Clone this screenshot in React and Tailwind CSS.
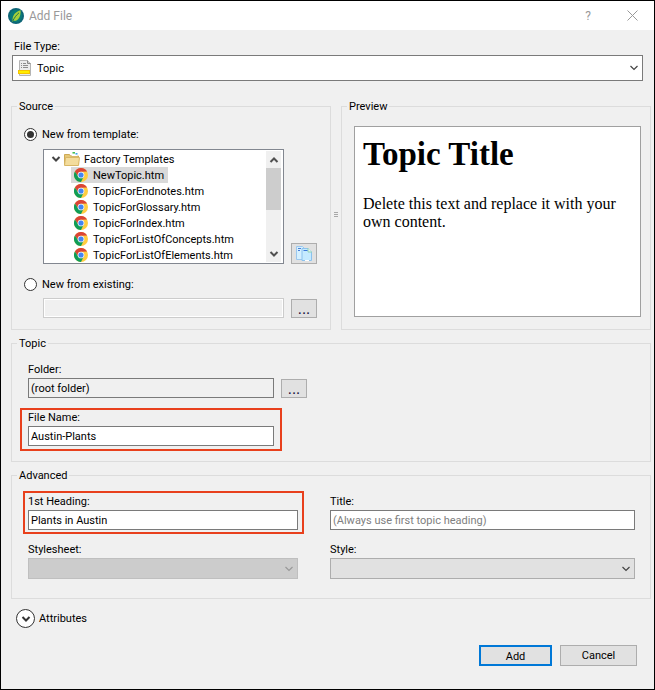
import { useState } from "react";

const templates = [
  "NewTopic.htm",
  "TopicForEndnotes.htm",
  "TopicForGlossary.htm",
  "TopicForIndex.htm",
  "TopicForListOfConcepts.htm",
  "TopicForListOfElements.htm",
];

function AppLogo() {
  return (
    <svg viewBox="0 0 16 16" className="size-4 shrink-0" aria-hidden="true">
      <circle cx="8" cy="8" r="8" fill="#0e6577" />
      <circle cx="8" cy="8" r="6.2" fill="#0a7a78" />
      <path d="M12.6 2.2C7.6 3.6 4.4 7 4.6 12.2L4 14l1.4-1.2c4.400.6 7.600-3.600 7.200-10.600z" fill="#a8cf38" />
      <path d="M11 4.800C8.400 7 6.400 9.600 4.700 13.200" stroke="#0a6a5c" strokeWidth="0.9" fill="none" />
    </svg>
  );
}

function TopicIcon() {
  return (
    <svg viewBox="0 0 14 17" className="h-[17px] w-3.5" aria-hidden="true">
      <path d="M1.500.5h8l3 3v12h-11z" fill="#ececec" stroke="#b4b4b4" />
      <path d="M9.500.5v3h3" fill="#d0d0d0" stroke="#8a8a8a" />
      <path d="M3 3.500h1M5 3.500h3M3 5.500h1M5 5.500h5M3 7.500h1M5 7.500h5" stroke="#8d8d8d" />
      <rect x="0.500" y="10.500" width="11" height="3" fill="#ffee00" stroke="#f5c400" />
    </svg>
  );
}

function FolderIcon() {
  return (
    <svg viewBox="0 0 16 14" className="h-3.5 w-4 shrink-0" aria-hidden="true">
      <path d="M.5 2.500h5l1 1.500h8v8.500h-14z" fill="#e6c877" stroke="#cda955" />
      <path d="M8 2.500V1h5.500v3H8z" fill="#fff" />
      <path d="M8.500.800h2.500" stroke="#3cba46" strokeWidth="1.500" />
      <path d="M11.500 1.800h2" stroke="#35a2e8" strokeWidth="1.500" />
      <path d="M1.500 5.500h14l-1 8H.500z" fill="#f3dc9c" stroke="#d8b766" />
    </svg>
  );
}

function ChromeIcon() {
  return (
    <svg viewBox="0 0 48 48" className="size-3.5 shrink-0" aria-hidden="true">
      <circle cx="24" cy="24" r="24" fill="#ffcd40" />
      <path d="M3.200 12A24 24 0 0 1 44.800 12L24 13A11 11 0 0 0 14.500 29.500z" fill="#db4437" />
      <path d="M3.200 12A24 24 0 0 0 24 48L33.500 29.500A11 11 0 0 1 14.500 29.500z" fill="#0f9d58" />
      <circle cx="24" cy="24" r="11.500" fill="#f4f4f4" />
      <circle cx="24" cy="24" r="8.800" fill="#4285f4" />
    </svg>
  );
}

function CopyIcon() {
  return (
    <svg viewBox="0 0 16 15" className="h-[15px] w-4" aria-hidden="true">
      <path d="M.5.500h6l1.500 1.500v11.500H.500z" fill="#d5f0ff" stroke="#9cc8ee" />
      <path d="M2 2.500h3M2 4.500h2" stroke="#4a7fd8" />
      <path d="M6 2.500h6l3.500 3v9H6z" fill="#c5eaff" stroke="#8cc2ee" />
      <path d="M12 2v4h4" fill="#e6f6e6" stroke="#8fd0b8" />
      <path d="M7.500 4.500h4" stroke="#3b78d8" />
      <path d="M9 14.500h4" stroke="#fff" />
    </svg>
  );
}

function Chevron({ className = "", up = false, bold = false }) {
  return (
    <svg viewBox="0 0 10 6" className={`h-1.5 w-2.5 ${className}`} aria-hidden="true">
      <path
        d={up ? "M1.500 5L5 1.500L8.500 5" : "M1.500 1L5 4.500L8.500 1"}
        fill="none"
        stroke="currentColor"
        strokeWidth={bold ? 2 : 1.2}
      />
    </svg>
  );
}

function Group({ title, className = "", children }) {
  return (
    <fieldset className="min-w-0 border border-[#dcdcdc]">
      <legend className="ml-[5px] px-0.5 pt-px leading-3.5">{title}</legend>
      <div className={className}>{children}</div>
    </fieldset>
  );
}

function TextInput({ background = "bg-white", ...props }) {
  return (
    <input
      type="text"
      className={`block h-5 w-full min-w-0 border border-[#7a7a7a] px-0.5 text-black outline-none placeholder:text-[#808080] ${background}`}
      {...props}
    />
  );
}

function Field({ id, label, children }) {
  return (
    <div className="min-w-0">
      <label htmlFor={id} className="block leading-4">
        {label}
      </label>
      {children}
    </div>
  );
}

function BrowseButton({ label, disabled }) {
  return (
    <button
      type="button"
      aria-label={label}
      disabled={disabled}
      className="flex h-[19px] w-[26px] shrink-0 items-end justify-center border border-[#adadad] bg-[#e1e1e1] text-base leading-4 text-[#1a1040]"
    >
      ...
    </button>
  );
}

function Radio({ id, checked, onChange, children }) {
  return (
    <div className="flex items-center gap-[5px]">
      <input
        id={id}
        type="radio"
        name="source"
        checked={checked}
        onChange={onChange}
        className="m-0 grid size-[13px] shrink-0 appearance-none place-items-center rounded-full border border-[#333] bg-white before:size-[7px] before:rounded-full checked:before:bg-[#333]"
      />
      <label htmlFor={id} className="pt-0.5 leading-3.5">
        {children}
      </label>
    </div>
  );
}

export default function App() {
  const [source, setSource] = useState("template");
  const [selected, setSelected] = useState("NewTopic.htm");
  const [fileName, setFileName] = useState("Austin-Plants");
  const [heading, setHeading] = useState("Plants in Austin");

  return (
    <div className="flex min-h-screen flex-col border border-black bg-[#f0f0f0] font-[Roboto,sans-serif] text-[11px] text-black">
      <header className="flex h-[29px] items-center gap-[5px] bg-white pr-3 pl-[7px] text-[#999]">
        <AppLogo />
        <h1 className="grow text-xs">Add File</h1>
        <button type="button" aria-label="Help" className="w-3 text-xs">
          ?
        </button>
        <button type="button" aria-label="Close" className="ml-6 p-1">
          <svg viewBox="0 0 11 11" className="size-[11px]" aria-hidden="true">
            <path d="M.5.500l10 10M10.500.500l-10 10" stroke="currentColor" />
          </svg>
        </button>
      </header>

      <main className="flex flex-col pt-[9px] pr-[3px] pl-2.5">
        <div className="pr-2 pl-px">
          <label htmlFor="type" className="ml-0.5 block leading-4">
            File Type:
          </label>
          <div className="relative">
            <select
              id="type"
              className="block h-[26px] w-full appearance-none border border-[#7a7a7a] bg-white pt-0.5 pl-6 text-black"
            >
              <option>Topic</option>
            </select>
            <span className="pointer-events-none absolute inset-y-0 left-1.5 flex items-center">
              <TopicIcon />
            </span>
            <Chevron className="pointer-events-none absolute top-2.5 right-1 text-[#444]" />
          </div>
        </div>

        <div className="mt-[18px] grid grid-cols-[minmax(0,32fr)_minmax(0,1fr)_minmax(0,31fr)]">
          <Group title="Source" className="pt-3 pr-[13px] pb-[11px] pl-3">
            <Radio
              id="from-template"
              checked={source === "template"}
              onChange={() => setSource("template")}
            >
              New from template:
            </Radio>
            <div className="mt-[7px] flex items-end gap-[7px] pl-[19px]">
              <div className="flex h-[115px] min-w-0 grow overflow-hidden border border-[#828790] bg-white">
                <ul role="tree" aria-label="Templates" className="min-w-0 grow pt-px">
                  <li role="treeitem" aria-expanded="true">
                    <div className="flex h-4 items-center gap-[3px] pl-[7px] whitespace-nowrap">
                      <Chevron bold className="text-[#444]" />
                      <FolderIcon />
                      <span className="pt-0.5 pl-px leading-3.5">Factory Templates</span>
                    </div>
                    <ul role="group" className="pl-[27px]">
                      {templates.map((name) => (
                        <li key={name} role="treeitem" aria-selected={name === selected}>
                          <button
                            type="button"
                            onClick={() => setSelected(name)}
                            className={`flex h-4 items-center gap-[5px] pr-1 pl-[3px] whitespace-nowrap ${name === selected ? "bg-[#d9d9d9]" : ""}`}
                          >
                            <ChromeIcon />
                            <span className="pt-0.5 leading-3.5">{name}</span>
                          </button>
                        </li>
                      ))}
                    </ul>
                  </li>
                </ul>
                <div className="my-px mr-0.5 flex w-[15px] shrink-0 flex-col items-center bg-[#f0f0f0] text-[#505050]">
                  <span className="flex h-[17px] items-center">
                    <Chevron up bold />
                  </span>
                  <span className="h-[42px] w-full bg-[#cdcdcd]" />
                  <span className="mt-auto flex h-[17px] items-center">
                    <Chevron bold />
                  </span>
                </div>
              </div>
              <button
                type="button"
                aria-label="Manage templates"
                className="flex h-[21px] w-[26px] shrink-0 items-center justify-center border border-[#adadad] bg-[#e1e1e1]"
              >
                <CopyIcon />
              </button>
            </div>
            <div className="mt-3">
              <Radio
                id="from-existing"
                checked={source === "existing"}
                onChange={() => setSource("existing")}
              >
                New from existing:
              </Radio>
            </div>
            <div className="mt-1.5 flex items-end gap-[7px] pl-[19px]">
              <input
                type="text"
                disabled
                aria-label="Existing file"
                className="h-5 w-full min-w-0 border border-[#ccc] bg-[#f0f0f0] inset-ring inset-ring-white"
              />
              <BrowseButton label="Browse for an existing file" disabled />
            </div>
          </Group>

          <div className="flex flex-col items-center justify-center gap-px">
            <span className="h-px w-1 bg-[#a8a8a8]" />
            <span className="h-px w-1 bg-[#a8a8a8]" />
            <span className="h-px w-1 bg-[#a8a8a8]" />
          </div>

          <Group title="Preview" className="pt-3 pr-[9px] pl-3">
            <div className="h-[191px] overflow-hidden border border-[#a0a0a0] bg-white px-2 pt-2 font-['Liberation_Serif',serif]">
              <h2 className="text-[33px] leading-[38px] font-bold">Topic Title</h2>
              <p className="mt-[22px] text-base leading-[18px]">
                Delete this text and replace it with your own content.
              </p>
            </div>
          </Group>
        </div>

        <div className="mt-1.5">
          <Group title="Topic" className="pt-[11px] pb-2.5 pl-2">
            <div className="flex items-end gap-[7px] pl-2">
              <div className="w-[246px]">
                <Field id="folder" label="Folder:">
                  <TextInput
                    id="folder"
                    readOnly
                    value="(root folder)"
                    background="bg-[#f0f0f0]"
                  />
                </Field>
              </div>
              <BrowseButton label="Browse for a folder" />
            </div>
            <div className="mt-2.5 w-[262px] border-2 border-[#e8401c] px-1.5 pb-[3px]">
              <Field id="file-name" label="File Name:">
                <TextInput
                  id="file-name"
                  value={fileName}
                  onChange={(e) => setFileName(e.target.value)}
                />
              </Field>
            </div>
          </Group>
        </div>

        <div className="mt-1.5">
          <Group title="Advanced" className="pt-2 pr-[15px] pb-[19px] pl-[11px]">
            <div className="grid grid-cols-[minmax(0,281fr)_minmax(0,305fr)] gap-x-[26px] gap-y-2">
              <div className="border-2 border-[#e8401c] pt-px pr-1 pb-0.5 pl-[3px]">
                <Field id="heading" label="1st Heading:">
                  <TextInput
                    id="heading"
                    value={heading}
                    onChange={(e) => setHeading(e.target.value)}
                  />
                </Field>
              </div>
              <div className="py-[3px]">
                <Field id="title" label="Title:">
                  <TextInput id="title" placeholder="(Always use first topic heading)" />
                </Field>
              </div>
              <div className="pr-1.5 pl-[5px]">
                <Field id="stylesheet" label="Stylesheet:">
                  <div className="relative">
                    <select
                      id="stylesheet"
                      disabled
                      className="block h-[21px] w-full appearance-none border border-[#bfbfbf] bg-[#ccc]"
                    />
                    <Chevron className="pointer-events-none absolute top-2 right-1 text-[#999]" />
                  </div>
                </Field>
              </div>
              <Field id="style" label="Style:">
                <div className="relative">
                  <select
                    id="style"
                    className="block h-[21px] w-full appearance-none border border-[#adadad] bg-[#e1e1e1]"
                  />
                  <Chevron className="pointer-events-none absolute top-2 right-1 text-[#444]" />
                </div>
              </Field>
            </div>
          </Group>
        </div>
      </main>

      <button type="button" className="mt-2.5 ml-[15px] flex items-center gap-1 self-start">
        <span className="flex size-[19px] items-center justify-center rounded-full border border-[#333] bg-white">
          <Chevron bold className="text-[#333]" />
        </span>
        <span className="pt-0.5">Attributes</span>
      </button>

      <footer className="mt-[17px] flex justify-end gap-2 pr-[17px] pb-[22px]">
        <button
          type="button"
          className="h-[21px] w-[73px] border-2 border-[#0078d7] bg-[#e1e1e1] pt-0.5"
        >
          Add
        </button>
        <button
          type="button"
          className="h-[21px] w-[77px] border border-[#adadad] bg-[#e1e1e1] pt-0.5"
        >
          Cancel
        </button>
      </footer>
    </div>
  );
}
